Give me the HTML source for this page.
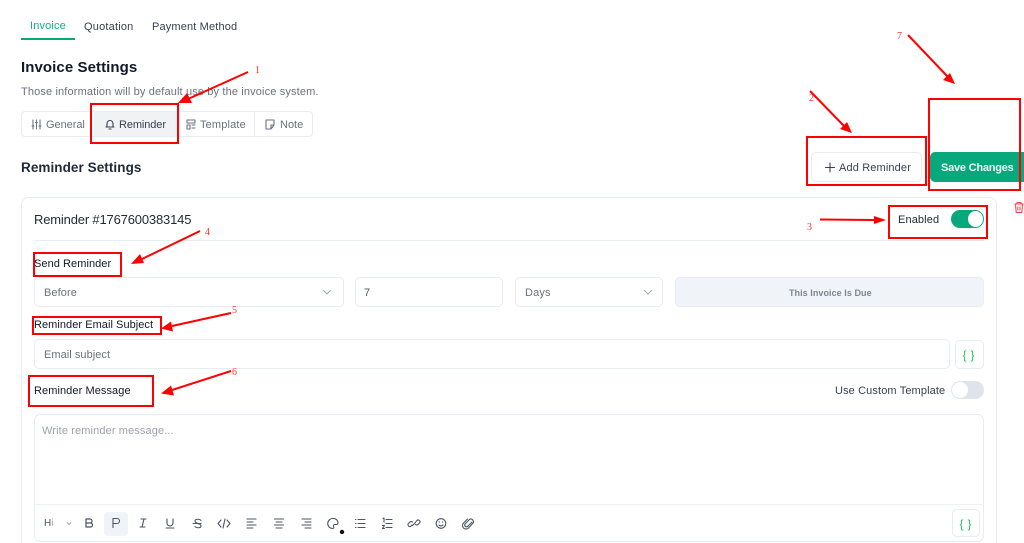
<!DOCTYPE html>
<html><head><meta charset="utf-8"><style>
html,body{margin:0;padding:0;background:#fff;width:1024px;height:543px;overflow:hidden}
#w{width:1024px;height:543px;position:relative;overflow:hidden;font-family:"Liberation Sans",sans-serif;color:#1f2937}
.a{position:absolute;white-space:nowrap}
.t{line-height:16px;height:16px}
.box{position:absolute;box-sizing:border-box;border:1px solid #e8ecf3;border-radius:5px;background:#fff}
.red{position:absolute;box-sizing:border-box;border:2px solid #f00}
svg{position:absolute;overflow:visible}
.ic{fill:none;stroke:#4b5563;stroke-width:1.1;stroke-linecap:round;stroke-linejoin:round}
</style></head><body><div id="w">
<div class="a t" style="left:30px;top:18px;font-size:11px;letter-spacing:.15px;color:#10b088">Invoice</div>
<div class="a t" style="left:84px;top:18.500px;font-size:11px;letter-spacing:.2px;color:#374151">Quotation</div>
<div class="a t" style="left:152px;top:18.500px;font-size:11px;letter-spacing:.15px;color:#374151">Payment Method</div>
<div class="a" style="left:21px;top:38px;width:54px;height:1.500px;background:#07a87b"></div>
<div class="a t" style="left:21px;top:60px;font-size:15px;font-weight:bold;letter-spacing:.08px;color:#111827">Invoice Settings</div>
<div class="a t" style="left:21px;top:84px;font-size:11px;letter-spacing:.14px;color:#6b7280">Those information will by default use by the invoice system.</div>

<div class="box" style="left:21px;top:111px;width:292px;height:26px;border-radius:4px"></div>
<div class="a" style="left:94px;top:112px;width:83px;height:24px;background:#f1f2f4"></div>
<div class="a" style="left:254px;top:112px;width:1px;height:24px;background:#e8ecf3"></div>
<div class="a t" style="left:46px;top:116.500px;font-size:11px;letter-spacing:-.05px;color:#6b7280">General</div>
<div class="a t" style="left:119px;top:116.500px;font-size:11px;letter-spacing:-.1px;color:#374151">Reminder</div>
<div class="a t" style="left:200px;top:116.500px;font-size:11px;letter-spacing:.15px;color:#6b7280">Template</div>
<div class="a t" style="left:280px;top:116.500px;font-size:11px;letter-spacing:0;color:#6b7280">Note</div>
<svg style="left:0;top:0" width="1024" height="543">
<g class="ic" style="stroke:#6b7280">
<path d="M33 120v9M36.500 120v9M40 120v9"/><path d="M32 126h2M35.500 122.500h2M39 126h2"/>
<path d="M106 127h8M107 127v-3.500a3 3 0 0 1 6 0V127M109 129h2" style="stroke:#374151"/>
<path d="M187 120h8v3h-8zM187 125h3v4h-3zM192 125h3M192 128h3"/>
<path d="M266 120h8v5l-3 4h-5zM271 129v-4h3"/>
</g></svg>

<div class="a t" style="left:21px;top:160px;font-size:13.500px;font-weight:bold;letter-spacing:.07px;color:#1f2937">Reminder Settings</div>
<div class="box" style="left:811px;top:152px;width:111px;height:30px"></div>
<svg style="left:0;top:0" width="1024" height="543"><path class="ic" style="stroke:#374151" d="M830 163v9M825.500 167.500h9"/></svg>
<div class="a t" style="left:839px;top:160px;font-size:11px;letter-spacing:.14px;color:#374151">Add Reminder</div>
<div class="a" style="left:930px;top:152px;width:100px;height:30px;background:#07a87b;border-radius:5px"></div>
<div class="a t" style="left:941px;top:160px;font-size:11px;font-weight:bold;letter-spacing:-.22px;color:#eafff8">Save Changes</div>

<div class="box" style="left:21px;top:197px;width:976px;height:370px;border-radius:8px"></div>
<div class="a t" style="left:34px;top:212px;font-size:13px;letter-spacing:-.17px;color:#1f2937">Reminder #1767600383145</div>
<div class="a" style="left:34px;top:240px;width:950px;height:1px;background:#e8ecf3"></div>
<div class="a t" style="left:898px;top:212px;font-size:11px;letter-spacing:.12px;color:#1f2937">Enabled</div>
<div class="a" style="left:951px;top:210px;width:33px;height:18px;background:#07a87b;border-radius:9px"></div>
<div class="a" style="left:968px;top:211px;width:15px;height:16px;background:#fff;border-radius:50%"></div>
<svg style="left:0;top:0" width="1024" height="543"><path d="M1014.500 204h9M1017 204v-1.500h4v1.500M1015.500 204.500l.7 8h5.600l.7-8M1017.800 206.500v4M1020 206.500v4" fill="none" stroke="#ef4444" stroke-width="1"/></svg>

<div class="a t" style="left:34px;top:256px;font-size:11px;letter-spacing:.06px;color:#111827">Send Reminder</div>
<div class="box" style="left:34px;top:277px;width:310px;height:30px"></div>
<div class="a t" style="left:44px;top:285px;font-size:11px;letter-spacing:.1px;color:#6b7280">Before</div>
<div class="box" style="left:355px;top:277px;width:148px;height:30px"></div>
<div class="a t" style="left:364px;top:285px;font-size:11px;color:#4b5563">7</div>
<div class="box" style="left:515px;top:277px;width:148px;height:30px"></div>
<div class="a t" style="left:525px;top:285px;font-size:11px;letter-spacing:.15px;color:#6b7280">Days</div>
<svg style="left:0;top:0" width="1024" height="543"><path d="M323 290l4 4 4-4M644 290l4 4 4-4" fill="none" stroke="#a3a9b3" stroke-width="1"/></svg>
<div class="box" style="left:675px;top:277px;width:309px;height:30px;background:#f0f3f8"></div>
<div class="a t" style="left:789px;top:284.500px;font-size:9px;font-weight:bold;letter-spacing:.06px;color:#7d8594">This Invoice Is Due</div>

<div class="a t" style="left:34px;top:317px;font-size:11px;letter-spacing:.05px;color:#111827">Reminder Email Subject</div>
<div class="box" style="left:34px;top:339px;width:916px;height:30px"></div>
<div class="a t" style="left:44px;top:347px;font-size:11px;letter-spacing:.05px;color:#6b7280">Email subject</div>
<div class="box" style="left:955px;top:340px;width:29px;height:29px"></div>
<div class="a t" style="left:962.500px;top:346.500px;font-size:12px;letter-spacing:4px;color:#22c55e">{}</div>

<div class="a t" style="left:34px;top:382.500px;font-size:11px;letter-spacing:.08px;color:#111827">Reminder Message</div>
<div class="a t" style="left:835px;top:382.500px;font-size:11px;letter-spacing:.12px;color:#374151">Use Custom Template</div>
<div class="a" style="left:951px;top:381px;width:33px;height:18px;background:#dfe4ec;border-radius:9px"></div>
<div class="a" style="left:952px;top:382px;width:16px;height:16px;background:#fff;border-radius:50%"></div>

<div class="box" style="left:34px;top:414px;width:950px;height:128px;border-radius:6px"></div>
<div class="a t" style="left:42px;top:423px;font-size:11px;letter-spacing:.12px;color:#9ca3af">Write reminder message...</div>
<div class="a" style="left:35px;top:504px;width:948px;height:1px;background:#eef1f5"></div>
<div class="a" style="left:104px;top:512px;width:24px;height:24px;background:#f0f3f8;border-radius:4px"></div>
<div class="a t" style="left:44px;top:516px;font-size:10px;color:#4b5563">H<span style="color:#b4a48c">i</span></div>
<svg style="left:0;top:0" width="1024" height="543">
<path d="M67 522.500l2 2 2-2" fill="none" stroke="#a3a9b3" stroke-width="1"/>
<g class="ic">
<path d="M86 519h4a2 2 0 0 1 0 4h-4zM86 523h4.500a2 2 0 0 1 0 4H86z" stroke-width="1.200"/>
<path d="M113 527.500v-9h4a2.500 2.500 0 0 1 0 5h-4"/>
<path d="M141 519h5M140 527h5M144 519l-2 8"/>
<path d="M167 519v4a3 3 0 0 0 6 0v-4M166 528h8"/>
<path d="M201 520.500c-1-1.500-6-2-6 .5 0 3 6 2 6 5 0 2.500-5 2-6 .5M193 523.500h8"/>
<path d="M221 520l-3 3.500 3 3.500M227 520l3 3.500-3 3.500M225 519l-2 9"/>
<path d="M247 519h9M247 522h6M247 525h9M247 528h6"/>
<path d="M274.500 519h9M276 522h6M274.500 525h9M276 528h6"/>
<path d="M302 519h9M305 522h6M302 525h9M305 528h6"/>
<path d="M333 518.500a5 5 0 1 0-.5 10c1.500 0 1.500-1 1-2-.5-1.200.5-2 1.500-2h1.500c1 0 1.500-1 1.500-2a4.500 4.500 0 0 0-5-4z"/>
<path d="M358 519.500h7M358 523.500h7M358 527.500h7M355.500 519.500h.5M355.500 523.500h.5M355.500 527.500h.5"/>
<path d="M386 519.500h6M386 523.500h6M386 527.500h6M383 518.500l1-.5v4M382.500 525.500h2l-2 3h2"/>
<path d="M412 525l-1.500 1.500a2 2 0 0 1-2.500-2.500l2-2a2 2 0 0 1 2.500 0M416 521.500l1.500-1.500a2 2 0 0 1 2.500 2.500l-2 2a2 2 0 0 1-2.500 0M412.500 525.500l3-3"/>
<circle cx="441" cy="523.500" r="4.800"/><path d="M439 525c1 1.200 3 1.200 4 0M439.300 521.800v.3M442.700 521.800v.3"/>
<path d="M472 522l-4.500 4.500a1.800 1.800 0 0 1-2.500-2.500l5-5a3 3 0 0 1 3.500 3.500l-5 5.500a3.500 3.500 0 0 1-5-5l4-4"/>
</g>
<circle cx="342" cy="532" r="2.200" fill="#111"/>
</svg>
<div class="box" style="left:952px;top:509px;width:28px;height:28px"></div>
<div class="a t" style="left:959.500px;top:515.500px;font-size:12px;letter-spacing:4px;color:#22c55e">{}</div>

<div class="red" style="left:90px;top:103px;width:89px;height:41px"></div>
<div class="red" style="left:806px;top:136px;width:121px;height:50px"></div>
<div class="red" style="left:928px;top:98px;width:93px;height:93px"></div>
<div class="red" style="left:888px;top:205px;width:100px;height:34px"></div>
<div class="red" style="left:33px;top:252px;width:89px;height:25px"></div>
<div class="red" style="left:32px;top:316px;width:130px;height:19px"></div>
<div class="red" style="left:28px;top:375px;width:126px;height:32px"></div>

<svg style="left:0;top:0" width="1024" height="543">
<g stroke="#f00" stroke-width="2" fill="#f00">
<path d="M248 72L188 99"/><path stroke="none" d="M178 103l9-10 5 10z"/>
<path d="M810 91L845 127"/><path stroke="none" d="M852 133l-12-4 7-7z"/>
<path d="M908 35L948 77"/><path stroke="none" d="M955 84l-12-4 7-7z"/>
<path d="M820 219.500L875 220"/><path stroke="none" d="M886 220l-12 4v-8z"/>
<path d="M200 231L142 259"/><path stroke="none" d="M131 264l9-10 4 9z"/>
<path d="M231 313L172 326"/><path stroke="none" d="M161 328.500l10-7 2 10z"/>
<path d="M231 371L172 390"/><path stroke="none" d="M161 393.500l10-8 3 10z"/>
</g>
<g font-family="Liberation Serif,serif" font-size="10" fill="#f33">
<text x="255" y="73">1</text><text x="809" y="101">2</text><text x="807" y="230">3</text><text x="205" y="235">4</text><text x="232" y="313">5</text><text x="232" y="375">6</text><text x="897" y="39">7</text>
</g>
</svg>
</div></body></html>
